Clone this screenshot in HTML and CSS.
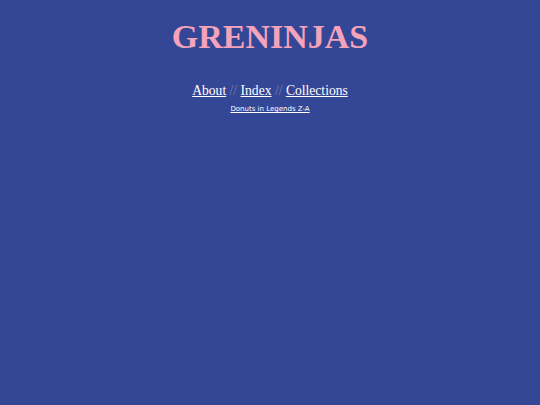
FILE: index.html
```html
<!DOCTYPE html>
<html>
<head>
<meta charset="utf-8">
<link rel="stylesheet" href="styles.css">
</head>
<body>
<div class="header">
  <h1 class="title">GRENINJAS</h1>
  <nav class="nav">
    <a href="#">About</a> <span class="sep">//</span> <a href="#">Index</a> <span class="sep">//</span> <a href="#">Collections</a>
  </nav>
  <div class="sub"><a href="#">Donuts in Legends Z-A</a></div>
</div>
</body>
</html>
```
FILE: styles.css
```css
html, body {
  margin: 0;
  padding: 0;
  background: #344696;
  height: 100%;
}
body {
  font-family: "Liberation Serif", serif;
  color: #ffffff;
}
.header {
  text-align: center;
  padding-top: 16px;
}
.title {
  margin: 0;
  font-size: 34px;
  font-weight: bold;
  color: #f5a3bb;
  line-height: 42px;
}
.nav {
  margin-top: 23px;
  font-size: 13.6px;
  line-height: 20px;
}
.nav a {
  color: #ffffff;
  text-decoration: underline;
}
.sep {
  color: #7c84ac;
}
.sub {
  margin-top: 3px;
  font-family: "DejaVu Sans", Verdana, sans-serif;
  font-size: 7px;
  line-height: 10px;
}
.sub a {
  color: #ffffff;
  text-decoration: underline;
}
```
